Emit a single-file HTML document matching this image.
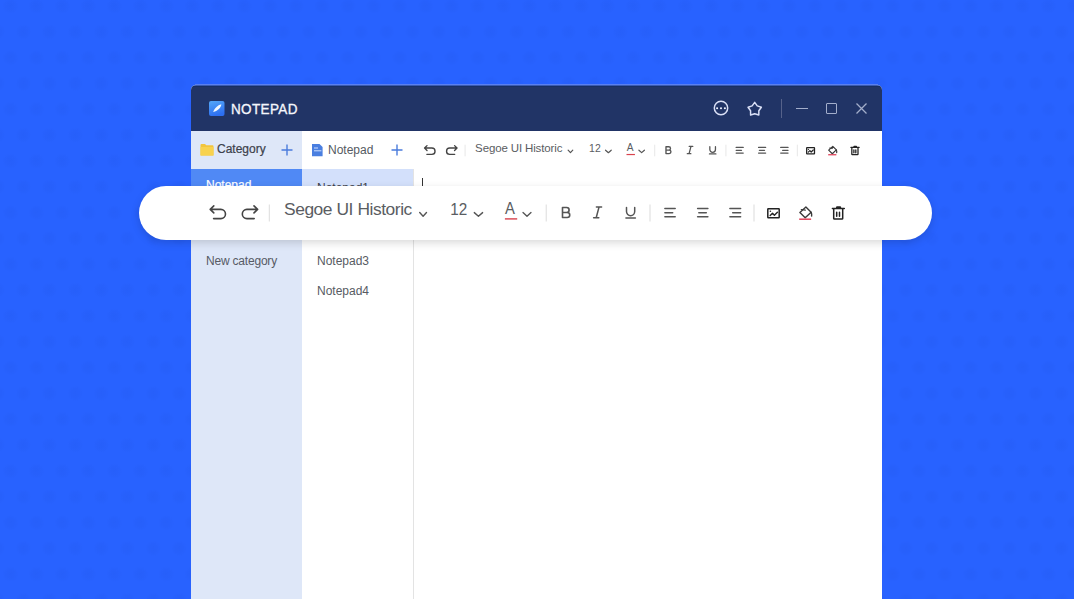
<!DOCTYPE html>
<html><head><meta charset="utf-8">
<style>
*{margin:0;padding:0;box-sizing:border-box}
html,body{width:1074px;height:599px;overflow:hidden}
body{background:#2862FF;font-family:"Liberation Sans",sans-serif;position:relative}
.abs{position:absolute}
.t{position:absolute;white-space:nowrap;line-height:1}
#win{position:absolute;left:191px;top:85px;width:691px;height:520px;border-radius:5px 5px 0 0;overflow:hidden;background:#fff}
#winedge{position:absolute;left:195px;top:84px;width:683px;height:1px;background:#5A80F0}
#title{position:absolute;left:0;top:0;width:691px;height:46px;background:linear-gradient(#3A5AB0 0,#3A5AB0 1px,#172F62 1px,#172F62 2px,#213466 2px)}
#col1{position:absolute;left:0;top:46px;width:111px;height:480px;background:#DEE7F8}
#col2{position:absolute;left:111px;top:46px;width:112px;height:480px;background:#fff}
#pill{position:absolute;left:139px;top:186px;width:793px;height:54px;border-radius:27px;background:#fff;box-shadow:0 3px 9px rgba(0,0,0,0.15)}
svg{position:absolute;overflow:visible}
.full{left:0;top:0;font-family:"Liberation Sans",sans-serif}
</style></head><body>
<svg class="full" width="1074" height="599" viewBox="0 0 1074 599" style="left:0;top:0"><defs><radialGradient id="dg"><stop offset="0" stop-color="#0A2A9A" stop-opacity="0.05"/><stop offset="0.55" stop-color="#0A2A9A" stop-opacity="0.032"/><stop offset="1" stop-color="#0A2A9A" stop-opacity="0"/></radialGradient><pattern id="dp" x="-0.8" y="0" width="25.95" height="51.66" patternUnits="userSpaceOnUse"><circle cx="11.3" cy="6" r="8" fill="url(#dg)"/><circle cx="11.3" cy="57.66" r="8" fill="url(#dg)"/><circle cx="24.25" cy="31.83" r="8" fill="url(#dg)"/><circle cx="-1.7" cy="31.83" r="8" fill="url(#dg)"/></pattern></defs><rect width="1074" height="599" fill="url(#dp)"/></svg>
<div id="winedge"></div>
<div id="win">
  <div id="title">
    <svg style="left:18px;top:16px" width="16" height="16" viewBox="0 0 16 16">
      <defs><linearGradient id="lg" x1="0" y1="0" x2="0.3" y2="1"><stop offset="0" stop-color="#55A8F8"/><stop offset="1" stop-color="#2D6FF2"/></linearGradient></defs>
      <rect x="0" y="0" width="15.5" height="15" rx="2" fill="url(#lg)"/>
      <path d="M4.2 11 C5.2 7.6 8.6 4 12.3 3.2 C12.2 6.2 9.2 9.8 4.2 11 Z" fill="#F2F8FF"/>
    </svg>
    <div class="t" style="left:39.5px;top:15.5px;font-size:15px;-webkit-text-stroke:0.35px #F4F6FC;color:#F4F6FC;letter-spacing:0.4px;transform:scaleX(0.9);transform-origin:0 0">NOTEPAD</div>
    <!-- more -->
    <svg style="left:522.4px;top:15.3px" width="16" height="16" viewBox="0 0 16 16">
      <circle cx="8" cy="8" r="6.7" fill="none" stroke="#D9DFF6" stroke-width="1.5"/>
      <circle cx="4.1" cy="8.2" r="1.05" fill="#EEF2FF"/><circle cx="8" cy="8.2" r="1.05" fill="#EEF2FF"/><circle cx="11.9" cy="8.2" r="1.05" fill="#EEF2FF"/>
    </svg>
    <!-- star -->
    <svg style="left:556px;top:16px" width="16" height="15" viewBox="0 0 16 15">
      <path d="M7.70 1.40 L10.26 4.88 L14.36 6.24 L11.84 9.74 L11.81 14.06 L7.70 12.75 L3.59 14.06 L3.56 9.74 L1.04 6.24 L5.14 4.88 Z" fill="none" stroke="#D9DFF6" stroke-width="1.5" stroke-linejoin="round"/>
    </svg>
    <div class="abs" style="left:590px;top:14px;width:1px;height:19px;background:#56628A"></div>
    <div class="abs" style="left:605px;top:22.5px;width:12px;height:1.3px;background:#A3AECB"></div>
    <div class="abs" style="left:635px;top:18px;width:11px;height:11px;border:1.3px solid #A3AECB;border-radius:1px"></div>
    <svg style="left:665px;top:18px" width="11" height="11" viewBox="0 0 11 11">
      <path d="M0.5 0.5 L10.5 10.5 M10.5 0.5 L0.5 10.5" stroke="#A3AECB" stroke-width="1.3"/>
    </svg>
  </div>
  <div id="col1">
    <svg style="left:9px;top:13px" width="14" height="12" viewBox="0 0 14 12">
      <path d="M0.5 1 Q0.5 0 1.5 0 L5 0 L6.3 1.3 L12.5 1.3 Q13.5 1.3 13.5 2.3 L13.5 11 Q13.5 11.5 13 11.5 L1 11.5 Q0.5 11.5 0.5 11 Z" fill="#F2C53D"/>
      <rect x="0.5" y="3" width="13" height="8.5" rx="0.5" fill="#F8D24E"/>
    </svg>
    <div class="t" style="left:26px;top:11.8px;font-size:12px;color:#3C414B;-webkit-text-stroke:0.2px #3C414B">Category</div>
    <svg style="left:90px;top:13px" width="12" height="12" viewBox="0 0 12 12">
      <path d="M6 0.5 V11.5 M0.5 6 H11.5" stroke="#4A7BDC" stroke-width="1.4"/>
    </svg>
    <div class="abs" style="left:0;top:38px;width:111px;height:32px;background:#5089F5"></div>
    <div class="t" style="left:15px;top:48.4px;font-size:12px;color:#fff;-webkit-text-stroke:0.2px #fff">Notepad</div>
    <div class="t" style="left:15px;top:124px;font-size:12px;color:#575B65;letter-spacing:-0.2px">New category</div>
  </div>
  <div id="col2">
    <svg style="left:10px;top:13px" width="11" height="13" viewBox="0 0 11 13">
      <path d="M0 0 L7.5 0 L10.6 3 L10.6 12.3 L0 12.3 Z" fill="#4A7FE0"/>
      <rect x="2" y="3.5" width="4" height="1" fill="#CFE0FF"/>
      <rect x="2" y="6.3" width="7.4" height="1" fill="#CFE0FF"/>
    </svg>
    <div class="t" style="left:26px;top:12.8px;font-size:12px;color:#555A62">Notepad</div>
    <svg style="left:88.5px;top:13px" width="12" height="12" viewBox="0 0 12 12">
      <path d="M6 0.5 V11.5 M0.5 6 H11.5" stroke="#4A7BDC" stroke-width="1.4"/>
    </svg>
    <div class="abs" style="left:0;top:38px;width:111px;height:32px;background:#D3E0FB"></div>
    <div class="t" style="left:15px;top:50.8px;font-size:12px;color:#3C414B">Notepad1</div>
    <div class="t" style="left:15px;top:124.3px;font-size:12px;color:#575B63">Notepad3</div>
    <div class="t" style="left:15px;top:154.3px;font-size:12px;color:#575B63">Notepad4</div>
  </div>
  <div class="abs" style="left:222px;top:84px;width:1px;height:440px;background:#E3E3E3"></div>
  <!-- editor -->
  <div class="abs" style="left:231px;top:93px;width:1.2px;height:11px;background:#333"></div>
</div>
<svg class="full" width="1074" height="599" viewBox="0 0 1074 599"><g transform="matrix(0.6853,0,0,0.6853,280.498,4.516)"><path d="M213.8 205.9 L210.2 209.4 L213.8 212.9 M210.4 209.4 H220.9 A4.6 4.6 0 0 1 220.9 218.6 H213.6" stroke="#444" stroke-width="2.00" fill="none" stroke-linecap="round" stroke-linejoin="round"/>
<path d="M254 205.9 L257.6 209.4 L254 212.9 M257.4 209.4 H246.9 A4.6 4.6 0 0 0 246.9 218.6 H254.2" stroke="#444" stroke-width="2.00" fill="none" stroke-linecap="round" stroke-linejoin="round"/>
<rect x="268.8" y="204.5" width="1" height="17" fill="#DCDCDC"/>
<rect x="545.7" y="204.5" width="1" height="17" fill="#DCDCDC"/>
<rect x="649.5" y="204.5" width="1" height="17" fill="#DCDCDC"/>
<rect x="753.5" y="204.5" width="1" height="17" fill="#DCDCDC"/>
<text x="284" y="215.60" font-size="16.79" fill="#5A5D62" letter-spacing="-0.2">Segoe UI Historic</text>
<path d="M419.7 212.6 L423.1 216.2 L426.5 212.6" stroke="#555" stroke-width="1.75" fill="none" stroke-linecap="round" stroke-linejoin="round"/>
<text x="450.3" y="215.60" font-size="16.79" fill="#5A5D62" textLength="17" lengthAdjust="spacingAndGlyphs">12</text>
<path d="M474.3 212.6 L478.45000000000005 216.2 L482.6 212.6" stroke="#555" stroke-width="1.75" fill="none" stroke-linecap="round" stroke-linejoin="round"/>
<text x="505.1" y="214.30" font-size="16.79" fill="#5A5D62" textLength="9.9" lengthAdjust="spacingAndGlyphs">A</text>
<rect x="504.9" y="218.03" width="12.3" height="1.75" fill="#D8434E"/>
<path d="M523 212.6 L527.0 216.2 L531 212.6" stroke="#555" stroke-width="1.75" fill="none" stroke-linecap="round" stroke-linejoin="round"/>
<path d="M562.5 207.5 V217.5 H567.2 A2.55 2.5 0 0 0 567.2 212.5 H562.5 M562.5 207.5 H566.6 A2.5 2.5 0 0 1 566.6 212.5" stroke="#555" stroke-width="2.00" fill="none" stroke-linecap="round" stroke-linejoin="round"/>
<path d="M596.4 207.1 H601.6 M593.6 217.7 H598.8 M599 207.1 L596.2 217.7" stroke="#555" stroke-width="1.88" fill="none" stroke-linecap="round" stroke-linejoin="round"/>
<path d="M626.5 207.5 V211.6 A4.1 4.1 0 0 0 634.7 211.6 V207.5" stroke="#555" stroke-width="1.88" fill="none" stroke-linecap="round" stroke-linejoin="round"/><path d="M625.9 218 H635.4" stroke="#555" stroke-width="1.75" stroke-linecap="round"/>
<path d="M664.9 208.6 H675.2" stroke="#555" stroke-width="1.88" stroke-linecap="round"/><path d="M664.9 212.7 H672.7" stroke="#555" stroke-width="1.88" stroke-linecap="round"/><path d="M664.9 216.8 H675.2" stroke="#555" stroke-width="1.88" stroke-linecap="round"/>
<path d="M697.6 208.6 H707.9" stroke="#555" stroke-width="1.88" stroke-linecap="round"/><path d="M698.8 212.7 H706.3" stroke="#555" stroke-width="1.88" stroke-linecap="round"/><path d="M697.6 216.8 H707.9" stroke="#555" stroke-width="1.88" stroke-linecap="round"/>
<path d="M729.9 208.6 H740.6" stroke="#555" stroke-width="1.88" stroke-linecap="round"/><path d="M732.7 212.7 H740.6" stroke="#555" stroke-width="1.88" stroke-linecap="round"/><path d="M729.9 216.8 H740.6" stroke="#555" stroke-width="1.88" stroke-linecap="round"/>
<rect x="767.8" y="208.8" width="11.4" height="9" rx="0.5" stroke="#222" stroke-width="1.88" fill="none"/>
<path d="M770.2 215.5 L772.5 213.2 L774.4 215.2 L777.4 212.3" stroke="#222" stroke-width="1.75" fill="none" stroke-linecap="round" stroke-linejoin="round"/>
<circle cx="770.4" cy="211.3" r="1.00" fill="#222"/>
<path d="M805.9 207 L811.1 212.2 L805.2 217.8 L799.9 212.5 Z" stroke="#3A3A3A" stroke-width="1.75" fill="none" stroke-linecap="round" stroke-linejoin="round"/>
<path d="M811.1 212.2 Q812 214 811.6 216" stroke="#3A3A3A" stroke-width="1.75" fill="none" stroke-linecap="round" stroke-linejoin="round"/>
<path d="M801.3 209.5 L805.3 210.1" stroke="#3A3A3A" stroke-width="1.50" fill="none" stroke-linecap="round" stroke-linejoin="round"/>
<rect x="799.2" y="218.26" width="11.9" height="1.88" fill="#E0435A"/>
<path d="M832.4 208.6 H844.3 M836.6 208.4 L836.9 206.9 H840.3 L840.6 208.4 M833.7 208.8 V218.4 Q833.7 219.1 834.4 219.1 H842 Q842.7 219.1 842.7 218.4 V208.8 M836.7 212.3 V216.3 M839.5 212.3 V216.3" stroke="#222" stroke-width="1.88" fill="none" stroke-linecap="round" stroke-linejoin="round"/></g></svg>
<div id="pill"></div>
<svg class="full" width="1074" height="599" viewBox="0 0 1074 599"><g><path d="M213.8 205.9 L210.2 209.4 L213.8 212.9 M210.4 209.4 H220.9 A4.6 4.6 0 0 1 220.9 218.6 H213.6" stroke="#444" stroke-width="1.60" fill="none" stroke-linecap="round" stroke-linejoin="round"/>
<path d="M254 205.9 L257.6 209.4 L254 212.9 M257.4 209.4 H246.9 A4.6 4.6 0 0 0 246.9 218.6 H254.2" stroke="#444" stroke-width="1.60" fill="none" stroke-linecap="round" stroke-linejoin="round"/>
<rect x="268.8" y="204.5" width="1" height="17" fill="#DCDCDC"/>
<rect x="545.7" y="204.5" width="1" height="17" fill="#DCDCDC"/>
<rect x="649.5" y="204.5" width="1" height="17" fill="#DCDCDC"/>
<rect x="753.5" y="204.5" width="1" height="17" fill="#DCDCDC"/>
<text x="284" y="215.00" font-size="17.40" fill="#5A5D62" letter-spacing="-0.44">Segoe UI Historic</text>
<path d="M419.7 212.6 L423.1 216.2 L426.5 212.6" stroke="#555" stroke-width="1.40" fill="none" stroke-linecap="round" stroke-linejoin="round"/>
<text x="450.3" y="215.00" font-size="17.40" fill="#5A5D62" textLength="17" lengthAdjust="spacingAndGlyphs">12</text>
<path d="M474.3 212.6 L478.45000000000005 216.2 L482.6 212.6" stroke="#555" stroke-width="1.40" fill="none" stroke-linecap="round" stroke-linejoin="round"/>
<text x="505.1" y="213.70" font-size="17.40" fill="#5A5D62" textLength="9.9" lengthAdjust="spacingAndGlyphs">A</text>
<rect x="504.9" y="218.20" width="12.3" height="1.40" fill="#D8434E"/>
<path d="M523 212.6 L527.0 216.2 L531 212.6" stroke="#555" stroke-width="1.40" fill="none" stroke-linecap="round" stroke-linejoin="round"/>
<path d="M562.5 207.5 V217.5 H567.2 A2.55 2.5 0 0 0 567.2 212.5 H562.5 M562.5 207.5 H566.6 A2.5 2.5 0 0 1 566.6 212.5" stroke="#555" stroke-width="1.60" fill="none" stroke-linecap="round" stroke-linejoin="round"/>
<path d="M596.4 207.1 H601.6 M593.6 217.7 H598.8 M599 207.1 L596.2 217.7" stroke="#555" stroke-width="1.50" fill="none" stroke-linecap="round" stroke-linejoin="round"/>
<path d="M626.5 207.5 V211.6 A4.1 4.1 0 0 0 634.7 211.6 V207.5" stroke="#555" stroke-width="1.50" fill="none" stroke-linecap="round" stroke-linejoin="round"/><path d="M625.9 218 H635.4" stroke="#555" stroke-width="1.40" stroke-linecap="round"/>
<path d="M664.9 208.6 H675.2" stroke="#555" stroke-width="1.50" stroke-linecap="round"/><path d="M664.9 212.7 H672.7" stroke="#555" stroke-width="1.50" stroke-linecap="round"/><path d="M664.9 216.8 H675.2" stroke="#555" stroke-width="1.50" stroke-linecap="round"/>
<path d="M697.6 208.6 H707.9" stroke="#555" stroke-width="1.50" stroke-linecap="round"/><path d="M698.8 212.7 H706.3" stroke="#555" stroke-width="1.50" stroke-linecap="round"/><path d="M697.6 216.8 H707.9" stroke="#555" stroke-width="1.50" stroke-linecap="round"/>
<path d="M729.9 208.6 H740.6" stroke="#555" stroke-width="1.50" stroke-linecap="round"/><path d="M732.7 212.7 H740.6" stroke="#555" stroke-width="1.50" stroke-linecap="round"/><path d="M729.9 216.8 H740.6" stroke="#555" stroke-width="1.50" stroke-linecap="round"/>
<rect x="767.8" y="208.8" width="11.4" height="9" rx="0.5" stroke="#222" stroke-width="1.50" fill="none"/>
<path d="M770.2 215.5 L772.5 213.2 L774.4 215.2 L777.4 212.3" stroke="#222" stroke-width="1.40" fill="none" stroke-linecap="round" stroke-linejoin="round"/>
<circle cx="770.4" cy="211.3" r="0.80" fill="#222"/>
<path d="M805.9 207 L811.1 212.2 L805.2 217.8 L799.9 212.5 Z" stroke="#3A3A3A" stroke-width="1.40" fill="none" stroke-linecap="round" stroke-linejoin="round"/>
<path d="M811.1 212.2 Q812 214 811.6 216" stroke="#3A3A3A" stroke-width="1.40" fill="none" stroke-linecap="round" stroke-linejoin="round"/>
<path d="M801.3 209.5 L805.3 210.1" stroke="#3A3A3A" stroke-width="1.20" fill="none" stroke-linecap="round" stroke-linejoin="round"/>
<rect x="799.2" y="218.45" width="11.9" height="1.50" fill="#E0435A"/>
<path d="M832.4 208.6 H844.3 M836.6 208.4 L836.9 206.9 H840.3 L840.6 208.4 M833.7 208.8 V218.4 Q833.7 219.1 834.4 219.1 H842 Q842.7 219.1 842.7 218.4 V208.8 M836.7 212.3 V216.3 M839.5 212.3 V216.3" stroke="#222" stroke-width="1.50" fill="none" stroke-linecap="round" stroke-linejoin="round"/></g></svg>
</body></html>
